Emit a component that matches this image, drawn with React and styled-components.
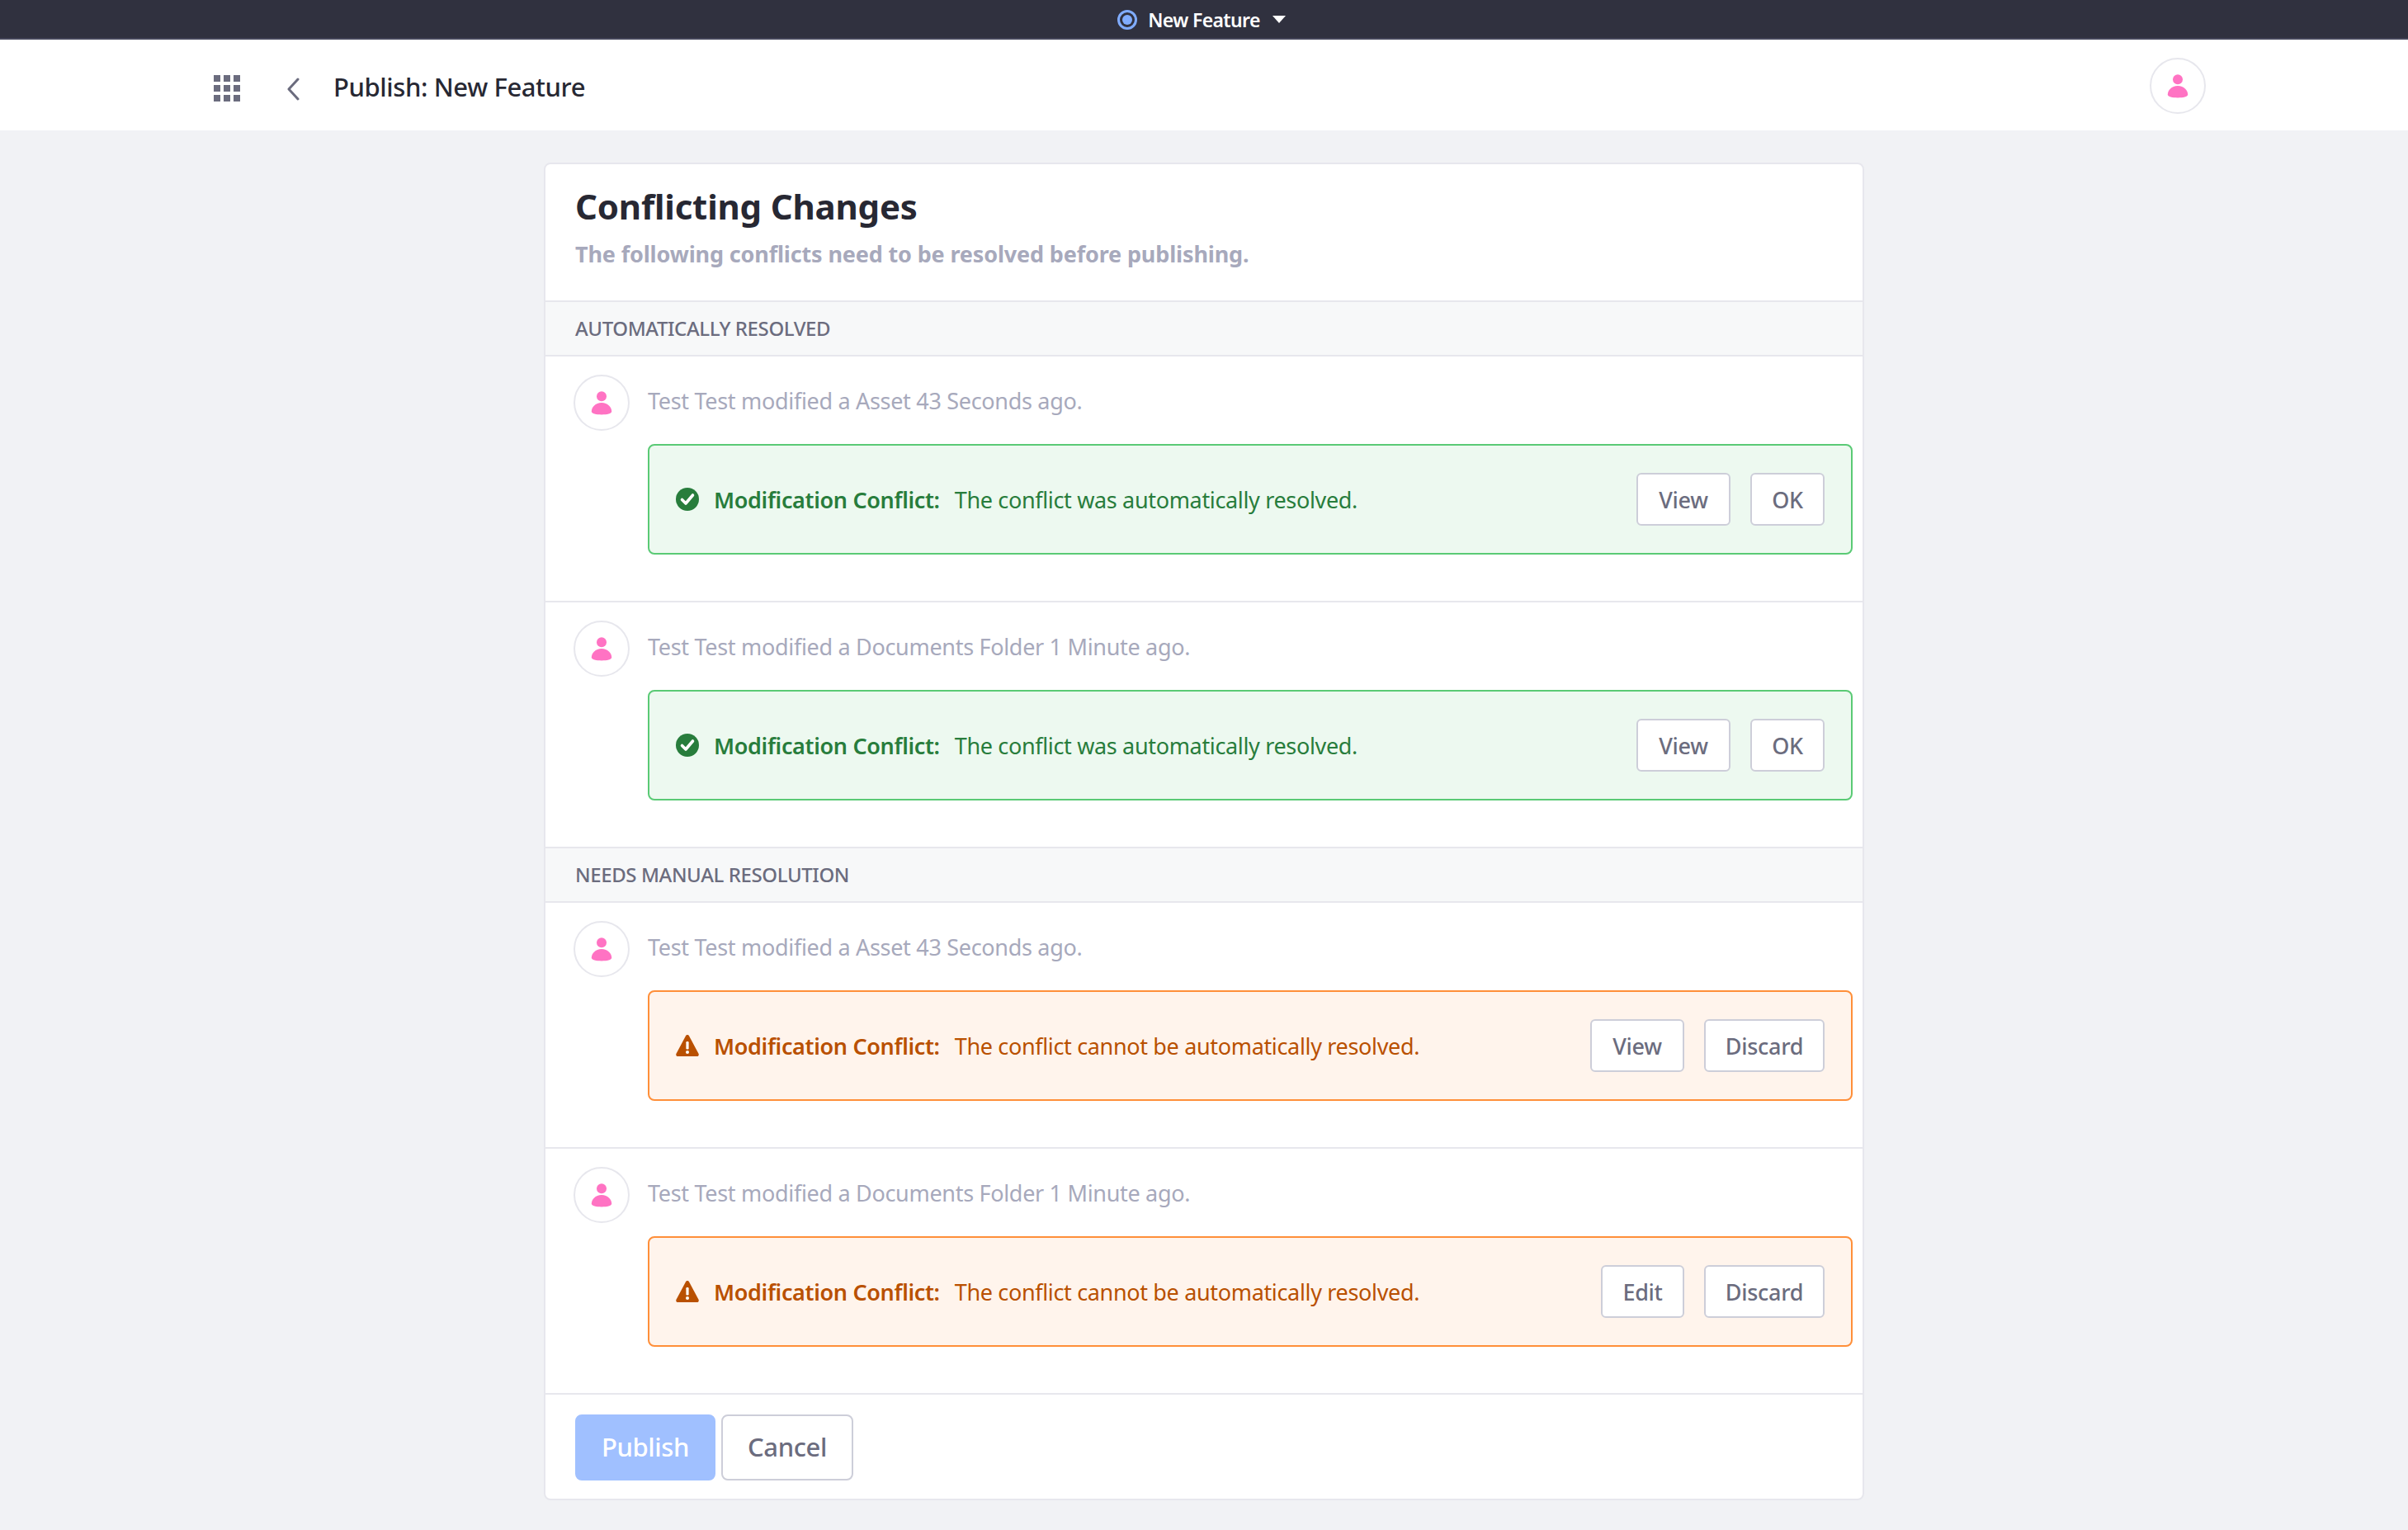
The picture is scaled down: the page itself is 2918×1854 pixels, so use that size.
import React from "react";
import styled, { createGlobalStyle } from "styled-components";

const Global = createGlobalStyle`
  html, body { margin: 0; padding: 0; background: #f1f2f5; }
  * { box-sizing: border-box; }
  body { font-family: "Noto Sans", "Open Sans", sans-serif; color: #272833; }
`;

const TopBar = styled.div`
  height: 48px;
  background: #30313f;
  border-bottom: 2px solid #45465a;
  display: flex;
  align-items: center;
  justify-content: center;
  padding: 1px 6px 0 0;
  color: #fff;
  font-size: 23px;
  font-weight: 600;
  letter-spacing: -0.65px;
`;
const Ring = styled.span`
  width: 24px;
  height: 24px;
  border-radius: 50%;
  border: 3px solid #80acff;
  display: flex;
  align-items: center;
  justify-content: center;
  margin: 1px 13px 0 0;
  &::after {
    content: "";
    width: 12px;
    height: 12px;
    border-radius: 50%;
    background: #80acff;
  }
`;
const Caret = styled.span`
  width: 0;
  height: 0;
  margin: 0 0 0 15px;
  border-left: 8px solid transparent;
  border-right: 8px solid transparent;
  border-top: 9px solid #fff;
`;

const Header = styled.header`
  height: 110px;
  background: #fff;
  display: flex;
  align-items: center;
  padding: 2px 245px 0 259px;
`;
const GridBox = styled.svg`
  width: 32px;
  height: 32px;
  margin-top: 6px;
`;
const BackIcon = styled.svg`
  margin: 8px 0 0 56px;
  width: 16px;
  height: 28px;
`;
const HeaderTitle = styled.div`
  margin: 2px 0 0 41px;
  font-size: 31px;
  font-weight: 500;
  letter-spacing: -0.4px;
  flex: 1;
`;

const Main = styled.main`
  padding: 39px 0 36px;
  display: flex;
  justify-content: center;
`;
const Card = styled.section`
  width: 1600px;
  background: #fff;
  border: 2px solid #e7e7ed;
  border-radius: 8px;
`;
const CardHead = styled.div`
  height: 167px;
  padding: 23px 36px 0;
  border-bottom: 2px solid #e7e7ed;
`;
const Title = styled.h1`
  margin: 0;
  font-size: 42px;
  line-height: 56px;
  font-weight: 700;
  letter-spacing: -0.2px;
`;
const Subtitle = styled.p`
  margin: 10px 0 0;
  font-size: 27px;
  line-height: 40px;
  font-weight: 700;
  color: #a7a9bc;
  letter-spacing: -0.15px;
`;
const SectionHead = styled.div`
  height: 66px;
  padding: 0 36px 1px;
  display: flex;
  align-items: center;
  background: #f7f8f9;
  border-bottom: 2px solid #e7e7ed;
  font-size: 24px;
  font-weight: 500;
  color: #6b6c7e;
  letter-spacing: -0.4px;
`;
const Item = styled.div`
  height: 298px;
  padding: 22px 12px 0 34px;
  border-bottom: 2px solid #e7e7ed;
  display: grid;
  grid-template-columns: 68px 1fr;
  grid-template-rows: 68px 134px;
  column-gap: 22px;
  row-gap: 16px;
`;
const Avatar = styled.div`
  width: 68px;
  height: 68px;
  border-radius: 50%;
  border: 2px solid #e7e7ed;
  background: #fff;
  display: flex;
  align-items: center;
  justify-content: center;
`;
const ItemText = styled.div`
  align-self: center;
  font-size: 27px;
  color: #a7a9bc;
  letter-spacing: -0.31px;
  margin-bottom: 5px;
`;
const Alert = styled.div`
  grid-column: 2;
  display: flex;
  align-items: center;
  padding: 0 32px;
  border-radius: 8px;
  border: 2px solid ${(p) => (p.$kind === "ok" ? "#5aca75" : "#ff8f39")};
  background: ${(p) => (p.$kind === "ok" ? "#edf9f0" : "#fff4ec")};
  color: ${(p) => (p.$kind === "ok" ? "#287d3c" : "#b95000")};
  font-size: 27px;
  letter-spacing: -0.34px;
`;
const AlertIcon = styled.svg`
  width: 28px;
  height: 28px;
  flex: none;
  margin-right: 18px;
`;
const AlertLabel = styled.strong`
  font-weight: 600;
  margin-right: 18px;
`;
const AlertMessage = styled.span`
  flex: 1;
`;
const Actions = styled.div`
  display: flex;
  gap: 24px;
`;
const SmallButton = styled.button`
  height: 64px;
  width: ${(p) => p.$w}px;
  padding: 0;
  background: #fff;
  border: 2px solid #cdced9;
  border-radius: 6px;
  color: #6b6c7e;
  font: 500 27px "Noto Sans", sans-serif;
  letter-spacing: -0.3px;
`;
const Footer = styled.div`
  padding: 24px 36px 22px;
  display: flex;
  gap: 7px;
`;
const BigButton = styled.button`
  height: 80px;
  width: ${(p) => p.$w}px;
  padding: 0 0 2px;
  border-radius: 8px;
  border: 2px solid ${(p) => (p.$primary ? "#a0c0ff" : "#cdced9")};
  background: ${(p) => (p.$primary ? "#a0c0ff" : "#fff")};
  color: ${(p) => (p.$primary ? "#fff" : "#6b6c7e")};
  font: 500 31px "Noto Sans", sans-serif;
  letter-spacing: -0.4px;
`;

function UserIcon() {
  return (
    <svg width="26" height="29" viewBox="0 0 26 29" fill="#ff73c3">
      <circle cx="13" cy="6.2" r="6" />
      <path d="M13 14C5.5 14 .8 19.5.8 24.6c0 2.9 5.6 3.9 12.2 3.9s12.2-1 12.2-3.9C25.2 19.5 20.500 14 13 14z" />
    </svg>
  );
}

function GridIcon() {
  const cells = [];
  for (let r = 0; r < 3; r++) {
    for (let c = 0; c < 3; c++) {
      cells.push(<rect key={`${r}${c}`} x={c * 12} y={r * 12} width="8" height="8" />);
    }
  }
  return (
    <GridBox viewBox="0 0 32 32" fill="#6b6c7e">
      {cells}
    </GridBox>
  );
}

function CheckIcon() {
  return (
    <AlertIcon viewBox="0 0 28 28">
      <circle cx="14" cy="14" r="14" fill="#287d3c" />
      <path d="M7.500 14.500l4.500 4.500 8.500-10" fill="none" stroke="#fff" strokeWidth="3.600" strokeLinecap="round" strokeLinejoin="round" />
    </AlertIcon>
  );
}

function WarnIcon() {
  return (
    <AlertIcon viewBox="0 0 28 28">
      <path d="M14 1c-.9 0-1.600.5-2 1.200L.5 23.800C-.3 25.400.700 27 2.400 27h23.200c1.700 0 2.700-1.600 1.900-3.200L16 2.200C15.600 1.500 14.900 1 14 1z" fill="#b95000" />
      <rect x="12.400" y="9" width="3.200" height="9.500" rx="1.200" fill="#fff" />
      <circle cx="14" cy="22" r="2" fill="#fff" />
    </AlertIcon>
  );
}

const buttonWidths = { View: 114, OK: 90, Discard: 146, Edit: 101 };

function Conflict({ text, kind, message, actions }) {
  return (
    <Item>
      <Avatar>
        <UserIcon />
      </Avatar>
      <ItemText>{text}</ItemText>
      <Alert $kind={kind}>
        {kind === "ok" ? <CheckIcon /> : <WarnIcon />}
        <AlertLabel>Modification Conflict:</AlertLabel>
        <AlertMessage>{message}</AlertMessage>
        <Actions>
          {actions.map((a) => (
            <SmallButton key={a} $w={buttonWidths[a]}>{a}</SmallButton>
          ))}
        </Actions>
      </Alert>
    </Item>
  );
}

const assetText = "Test Test modified a Asset 43 Seconds ago.";
const folderText = "Test Test modified a Documents Folder 1 Minute ago.";
const okMsg = "The conflict was automatically resolved.";
const badMsg = "The conflict cannot be automatically resolved.";

export default function App() {
  return (
    <>
      <Global />
      <TopBar>
        <Ring />
        New Feature
        <Caret />
      </TopBar>
      <Header>
        <GridIcon />
        <BackIcon viewBox="0 0 16 28">
          <path d="M14 2L3 14l11 12" fill="none" stroke="#6b6c7e" strokeWidth="3" strokeLinecap="round" strokeLinejoin="round" />
        </BackIcon>
        <HeaderTitle>Publish: New Feature</HeaderTitle>
        <Avatar>
          <UserIcon />
        </Avatar>
      </Header>
      <Main>
        <Card>
          <CardHead>
            <Title>Conflicting Changes</Title>
            <Subtitle>The following conflicts need to be resolved before publishing.</Subtitle>
          </CardHead>
          <SectionHead>AUTOMATICALLY RESOLVED</SectionHead>
          <Conflict text={assetText} kind="ok" message={okMsg} actions={["View", "OK"]} />
          <Conflict text={folderText} kind="ok" message={okMsg} actions={["View", "OK"]} />
          <SectionHead>NEEDS MANUAL RESOLUTION</SectionHead>
          <Conflict text={assetText} kind="warn" message={badMsg} actions={["View", "Discard"]} />
          <Conflict text={folderText} kind="warn" message={badMsg} actions={["Edit", "Discard"]} />
          <Footer>
            <BigButton $primary $w={170}>Publish</BigButton>
            <BigButton $w={160}>Cancel</BigButton>
          </Footer>
        </Card>
      </Main>
    </>
  );
}
